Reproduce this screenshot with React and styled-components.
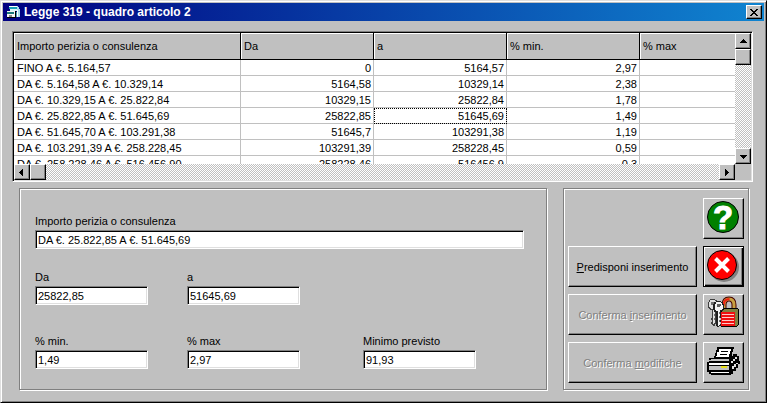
import styled, { createGlobalStyle, css } from 'styled-components';

const ROWS = [
	['FINO A €. 5.164,57', '0', '5164,57', '2,97'],
	['DA €. 5.164,58 A €. 10.329,14', '5164,58', '10329,14', '2,38'],
	['DA €. 10.329,15 A €. 25.822,84', '10329,15', '25822,84', '1,78'],
	['DA €. 25.822,85 A €. 51.645,69', '25822,85', '51645,69', '1,49'],
	['DA €. 51.645,70 A €. 103.291,38', '51645,7', '103291,38', '1,19'],
	['DA €. 103.291,39 A €. 258.228,45', '103291,39', '258228,45', '0,59'],
	['DA €. 258.228,46 A €. 516.456,90', '258228,46', '516456,9', '0,3'],
];

const ARROWS = {
	up: 'M4 8h7v-1h-1v-1h-1v-1h-1v-1h-1v1h-1v1h-1v1h-1z',
	down: 'M4 5h7v1h-1v1h-1v1h-1v1h-1v-1h-1v-1h-1v-1h-1z',
	left: 'M8 3v7h-1v-1h-1v-1h-1v-1h-1v-1h1v-1h1v-1h1v-1z',
	right: 'M5 3v7h1v-1h1v-1h1v-1h1v-1h-1v-1h-1v-1h-1v-1z',
};

const Arrow = ({ dir }) => (
	<svg width="13" height="13" viewBox="0 0 13 13" shapeRendering="crispEdges">
		<path d={ARROWS[dir]} />
	</svg>
);

const FormIcon = () => (
	<svg width="15" height="16" viewBox="0 0 15 16" shapeRendering="crispEdges">
		<path d="M3 2h8v1h1v2h1v8h-2v-7h-8z" fill="#a8dcec" />
		<path d="M2 2h8v1h-8z" fill="#fff" />
		<path d="M2 3h8v2h-8z" fill="#18a0b8" />
		<path d="M3 5h7v2h-7z" fill="#d8f4f8" />
		<path d="M10 6h1v7h-1z" fill="#fff" />
		<path d="M0 7h9v7h-9z" fill="#000" />
		<path d="M0 7h8v6h-8z" fill="#f4f4f4" />
		<path d="M0 8h7v2h-7z" fill="#187878" />
		<path d="M2 11h3v2h-3z" fill="#888" />
		<path d="M9 8h1v5h-1z" fill="#48a0b0" />
	</svg>
);

const HelpIcon = () => (
	<svg width="37" height="37" viewBox="0 0 37 37">
		<circle cx="18" cy="17" r="15.5" fill="#008000" stroke="#000" />
		<HelpMark x="18" y="29">
			?
		</HelpMark>
	</svg>
);

const CloseIcon = () => (
	<svg width="37" height="37" viewBox="0 0 37 37">
		<circle cx="19" cy="19" r="15" fill="#808080" />
		<circle cx="17" cy="17" r="14.5" fill="#f00" stroke="#000" />
		<path d="M10.5 10.5l13 13M23.5 10.5l-13 13" stroke="#fff" strokeWidth="4" />
	</svg>
);

const LockIcon = () => (
	<svg width="37" height="37" viewBox="0 0 37 37">
		<path d="M19 16V9q0-6 5-6t5 6v7" fill="none" stroke="#400" strokeWidth="5" />
		<path d="M19 16V9q0-6 5-6t5 6v7" fill="none" stroke="#c8a040" strokeWidth="3" />
		<path d="M18.5 10q0-7 6-7" fill="none" stroke="#f02010" strokeWidth="2" />
		<g shapeRendering="crispEdges">
			<path d="M16 15l3-3h14l1 2v14l-3 3h-15z" fill="#000" />
			<path d="M17 15l2-2h13l1 1v14l-2 2h-3z" fill="#808040" />
			<path d="M16 16h14v14h-14z" fill="#f01010" />
			<path d="M17 18h12v1h-12zM17 21h12v1h-12zM17 24h12v1h-12zM17 27h12v1h-12z" fill="#ffc8c8" />
		</g>
		<g shapeRendering="crispEdges">
			<path d="M5 3h5v1h2v1h1v7h-1v2h-1v14h-1v2h-2v-1h-1v-1h-1v-2h1v-2h-1v-2h1v-8h-2v-1h-1v-1h-1v-6h1v-2h1z" fill="#404040" />
			<path d="M5 4h5v1h2v6h-1v2h-1v14h-1v1h-1v-15h-2v-1h-1v-1h-1v-5h1z" fill="#e0e0e0" />
			<path d="M6 6h3v1h1v2h-4z" fill="#707070" />
			<path d="M9 14h1v2h-1zM9 18h1v2h-1zM9 22h1v2h-1z" fill="#707070" />
			<path d="M11 5h5v1h2v2h1v5h-1v2h-2v7h-1v2h1v2h-1v2h1v2h-2v1h-2v-1h-1v-14h-2v-2h-1v-6h1v-2h1z" fill="#202020" />
			<path d="M11 6h5v1h1v2h1v4h-1v1h-2v15h-1v1h-1v-15h-2v-1h-1v-6h1z" fill="#f4f4f4" />
			<path d="M12 8h4v2h-1v1h-3z" fill="#606060" />
			<path d="M14 16h1v2h-1zM14 20h1v2h-1zM14 24h1v2h-1z" fill="#707070" />
		</g>
	</svg>
);

const PrinterIcon = () => (
	<svg width="37" height="37" viewBox="0 0 37 37" shapeRendering="crispEdges">
		<path d="M4 14h5v-2h19v-2h4v2h2v5h1v3h-2v4h-2v3h-3v3h-2v1h-20v-1h-2v-2h-2v-10h2z" fill="#000" />
		<path d="M6 15h18v2h-20v-1h2z" fill="#c0c0c0" />
		<path d="M4 19h20v2h-20z" fill="#fff" />
		<path d="M4 22h20v4h-20z" fill="#c0c0c0" />
		<path d="M6 28h18v1h-18z" fill="#fff" />
		<path d="M26 17h2v-2h2v-2h2v2h-2v2h-2v2h-2zM27 22h2v-2h2v-1h2v1h-2v3h-2v2h-2z" fill="#e0e0e0" />
		<path d="M16 22h6v2h-6z" fill="#e8e020" />
		<path d="M12 3h17v2h-1v3h-1v4h-2v3h-16v-3h1v-3h1v-3h1z" fill="#000" />
		<path d="M14 5h12v2h-1v3h-1v3h-13v-1h1v-4h2z" fill="#fff" />
		<path d="M16 7h7v1h-7zM15 10h7v1h-7z" fill="#000" />
	</svg>
);

const Field = ({ id, label, value, wide }) => (
	<FieldBox $wide={wide}>
		<label htmlFor={id}>{label}</label>
		<TextBox id={id} defaultValue={value} />
	</FieldBox>
);

const App = () => {
	return (
		<>
			<GlobalStyle />
			<Window>
				<TitleBar>
					<FormIcon />
					<h1>Legge 319 - quadro articolo 2</h1>
					<CloseButton type="button" aria-label="Chiudi">
						<svg width="8" height="7" viewBox="0 0 8 7" shapeRendering="crispEdges">
							<path d="M0 0h2v1h1v1h2v-1h1v-1h2v1h-1v1h-1v1h-1v1h1v1h1v1h1v1h-2v-1h-1v-1h-2v1h-1v1h-2v-1h1v-1h1v-1h1v-1h-1v-1h-1v-1h-1z" />
						</svg>
					</CloseButton>
				</TitleBar>

				<Content>
					<GridFrame>
						<Viewport>
							<DataTable>
								<colgroup>
									<Col $w={227} />
									<Col $w={133} />
									<Col $w={133} />
									<Col $w={133} />
									<col />
								</colgroup>
								<thead>
									<tr>
										<th>Importo perizia o consulenza</th>
										<th>Da</th>
										<th>a</th>
										<th>% min.</th>
										<th>% max</th>
									</tr>
								</thead>
								<tbody>
									{ROWS.map(([name, from, to, min], i) => (
										<tr key={name}>
											<Cell>{name}</Cell>
											<Cell $num>{from}</Cell>
											<Cell $num $focused={i === 3}>
												{to}
											</Cell>
											<Cell $num>{min}</Cell>
											<Cell $num />
										</tr>
									))}
								</tbody>
							</DataTable>
						</Viewport>
						<ScrollTrack $vertical>
							<ScrollButton type="button" aria-label="Su">
								<Arrow dir="up" />
							</ScrollButton>
							<Thumb />
							<Spacer />
							<ScrollButton type="button" aria-label="Giù">
								<Arrow dir="down" />
							</ScrollButton>
						</ScrollTrack>
						<ScrollTrack>
							<ScrollButton type="button" aria-label="Sinistra">
								<Arrow dir="left" />
							</ScrollButton>
							<Thumb />
							<Spacer />
							<ScrollButton type="button" aria-label="Destra">
								<Arrow dir="right" />
							</ScrollButton>
						</ScrollTrack>
					</GridFrame>

					<Panels>
						<DetailPanel>
							<Field id="importo" label="Importo perizia o consulenza" value="DA €. 25.822,85 A €. 51.645,69" wide />
							<FieldRow $top={21}>
								<Field id="da" label="Da" value="25822,85" />
								<Field id="a" label="a" value="51645,69" />
							</FieldRow>
							<FieldRow $top={29}>
								<Field id="min" label="% min." value="1,49" />
								<Field id="max" label="% max" value="2,97" />
								<LastField>
									<Field id="minimo" label="Minimo previsto" value="91,93" />
								</LastField>
							</FieldRow>
						</DetailPanel>

						<ActionPanel>
							<span />
							<Button type="button" aria-label="Aiuto">
								<HelpIcon />
							</Button>
							<Button type="button">
								<span>
									<u>P</u>redisponi inserimento
								</span>
							</Button>
							<Button type="button" aria-label="Esci" $default>
								<CloseIcon />
							</Button>
							<Button type="button" disabled>
								<span>
									Conferma <u>i</u>nserimento
								</span>
							</Button>
							<Button type="button" aria-label="Blocca">
								<LockIcon />
							</Button>
							<Button type="button" disabled>
								<span>
									Conferma <u>m</u>odifiche
								</span>
							</Button>
							<Button type="button" aria-label="Stampa">
								<PrinterIcon />
							</Button>
						</ActionPanel>
					</Panels>
				</Content>
			</Window>
		</>
	);
};

const GlobalStyle = createGlobalStyle`
	* {
		box-sizing: border-box;
	}

	body {
		margin: 0;
		background: #c0c0c0;
		color: #000;
		font: 11px/14px 'Liberation Sans', Arial, sans-serif;
	}

	button, input {
		margin: 0;
		font: inherit;
		color: inherit;
		border-radius: 0;
	}

	svg {
		display: block;
		flex: none;
	}
`;

const raised = css`
	background: #c0c0c0;
	border: 1px solid;
	border-color: #fff #000 #000 #fff;
	box-shadow: inset -1px -1px #808080;
`;

const etched = css`
	border: 1px solid #808080;
	box-shadow: 1px 1px #fff, inset 1px 1px #fff;
`;

const HelpMark = styled.text`
	fill: #fff;
	stroke: #fff;
	stroke-width: 1px;
	font: bold 33px 'Liberation Sans', Arial, sans-serif;
	text-anchor: middle;
`;

const Window = styled.main`
	min-height: 100vh;
	padding: 2px;
	background: #c0c0c0;
	border: 1px solid;
	border-color: #dfdfdf #000 #000 #dfdfdf;
	box-shadow: inset 1px 1px #fff, inset -1px -1px #808080;
`;

const TitleBar = styled.header`
	display: flex;
	align-items: center;
	gap: 2px;
	height: 18px;
	padding: 0 2px 0 4px;
	background: linear-gradient(to right, #000080, #1084d0);
	color: #fff;

	h1 {
		flex: 1;
		margin: 0;
		font-size: 12px;
		line-height: 18px;
	}
`;

const CloseButton = styled.button`
	${raised}
	display: flex;
	align-items: center;
	justify-content: center;
	width: 16px;
	height: 14px;
	padding: 0;
`;

const Content = styled.div`
	padding: 10px 11px 10px 9px;
`;

const GridFrame = styled.section`
	display: grid;
	grid-template: 131px 16px / 1fr 16px;
	border: 1px solid;
	border-color: #808080 #fff #fff #808080;
	padding: 1px;
	box-shadow: inset 1px 1px #000, inset -1px -1px #dfdfdf;
`;

const Viewport = styled.div`
	overflow: hidden;
	background: #fff;
`;

const Col = styled.col`
	width: ${(p) => p.$w}px;
`;

const DataTable = styled.table`
	width: 100%;
	table-layout: fixed;
	border-collapse: separate;
	border-spacing: 0;

	th {
		height: 27px;
		padding: 0 3px;
		background: #c0c0c0;
		border-right: 1px solid #000;
		border-bottom: 1px solid #000;
		box-shadow: inset 1px 1px #fff;
		font-weight: normal;
		text-align: left;
	}

	th:last-child,
	td:last-child {
		border-right: 0;
	}
`;

const Cell = styled.td`
	height: 16px;
	padding: 0 ${(p) => (p.$num ? 2 : 3)}px;
	border-right: 1px solid #c0c0c0;
	border-bottom: 1px solid #c0c0c0;
	text-align: ${(p) => (p.$num ? 'right' : 'left')};
	white-space: nowrap;
	outline: ${(p) => (p.$focused ? '1px dotted #000' : 'none')};
	outline-offset: -1px;
`;

const ScrollTrack = styled.div`
	display: flex;
	flex-direction: ${(p) => (p.$vertical ? 'column' : 'row')};
	background: repeating-conic-gradient(#c0c0c0 0 25%, #fff 0 50%) 0 0 / 2px 2px;
`;

const ScrollButton = styled.button`
	${raised}
	flex: none;
	width: 16px;
	height: 16px;
	padding: 0;
`;

const Thumb = styled.div`
	${raised}
	flex: none;
	width: 16px;
	height: 16px;
`;

const Spacer = styled.div`
	flex: 1;
`;

const Panels = styled.div`
	display: flex;
	gap: 16px;
	margin: 6px 4px 0 7px;
`;

const DetailPanel = styled.section`
	${etched}
	flex: 1;
	padding: 25px 22px 20px 15px;
`;

const FieldRow = styled.div`
	display: flex;
	gap: 39px;
	margin-top: ${(p) => p.$top}px;
`;

const FieldBox = styled.div`
	display: flex;
	flex-direction: column;
	gap: 2px;
	width: ${(p) => (p.$wide ? '100%' : '113px')};
`;

const LastField = styled.div`
	margin-left: 24px;
`;

const TextBox = styled.input`
	width: 100%;
	height: 19px;
	padding: 1px 2px;
	background: #fff;
	border: 1px solid;
	border-color: #808080 #fff #fff #808080;
	box-shadow: inset 1px 1px #000, inset -1px -1px #dfdfdf;
	outline: none;
`;

const ActionPanel = styled.section`
	${etched}
	display: grid;
	grid-template-columns: 129px 41px;
	grid-auto-rows: 41px;
	gap: 7px 6px;
	padding: 9px 4px 6px;
`;

const Button = styled.button`
	${raised}
	display: flex;
	align-items: center;
	justify-content: center;
	padding: 0;
	white-space: nowrap;

	${(p) =>
		p.$default &&
		css`
			border-color: #000;
			box-shadow: inset 1px 1px #fff, inset -1px -1px #000, inset -2px -2px #808080;
		`}

	&:disabled {
		color: #808080;
		text-shadow: 1px 1px #fff;
	}
`;

export default App;
